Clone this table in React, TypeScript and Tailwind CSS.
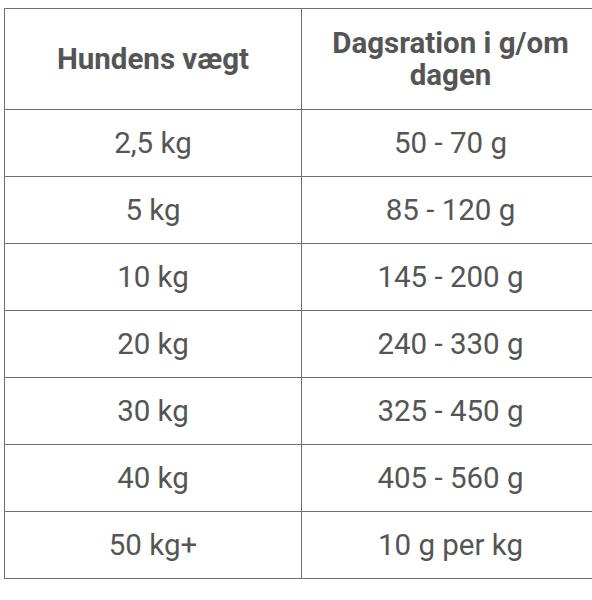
import React from "react";

const rows: [string, string][] = [
  ["2,5 kg", "50 - 70 g"],
  ["5 kg", "85 - 120 g"],
  ["10 kg", "145 - 200 g"],
  ["20 kg", "240 - 330 g"],
  ["30 kg", "325 - 450 g"],
  ["40 kg", "405 - 560 g"],
  ["50 kg+", "10 g per kg"],
];

export default function App() {
  return (
    <div className="w-[592px] h-[600px] overflow-hidden bg-white pt-[8px] pl-[4px]" style={{ fontFamily: "Roboto, 'Liberation Sans', sans-serif" }}>
      <table className="w-[595px] table-fixed border-collapse text-[#555] text-[29.5px] leading-[32px]">
        <colgroup>
          <col className="w-[297px]" />
          <col className="w-[298px]" />
        </colgroup>
        <thead>
          <tr className="h-[101px]">
            <th className="border-[1.5px] border-[#6e6e6e] font-bold text-center align-middle px-2">Hundens vægt</th>
            <th className="border-[1.5px] border-[#6e6e6e] font-bold text-center align-middle px-2">Dagsration i g/om dagen</th>
          </tr>
        </thead>
        <tbody>
          {rows.map(([a, b], i) => (
            <tr key={i} className="h-[67px]">
              <td className="border-[1.5px] border-[#6e6e6e] text-center align-middle">{a}</td>
              <td className="border-[1.5px] border-[#6e6e6e] text-center align-middle">{b}</td>
            </tr>
          ))}
        </tbody>
      </table>
    </div>
  );
}
